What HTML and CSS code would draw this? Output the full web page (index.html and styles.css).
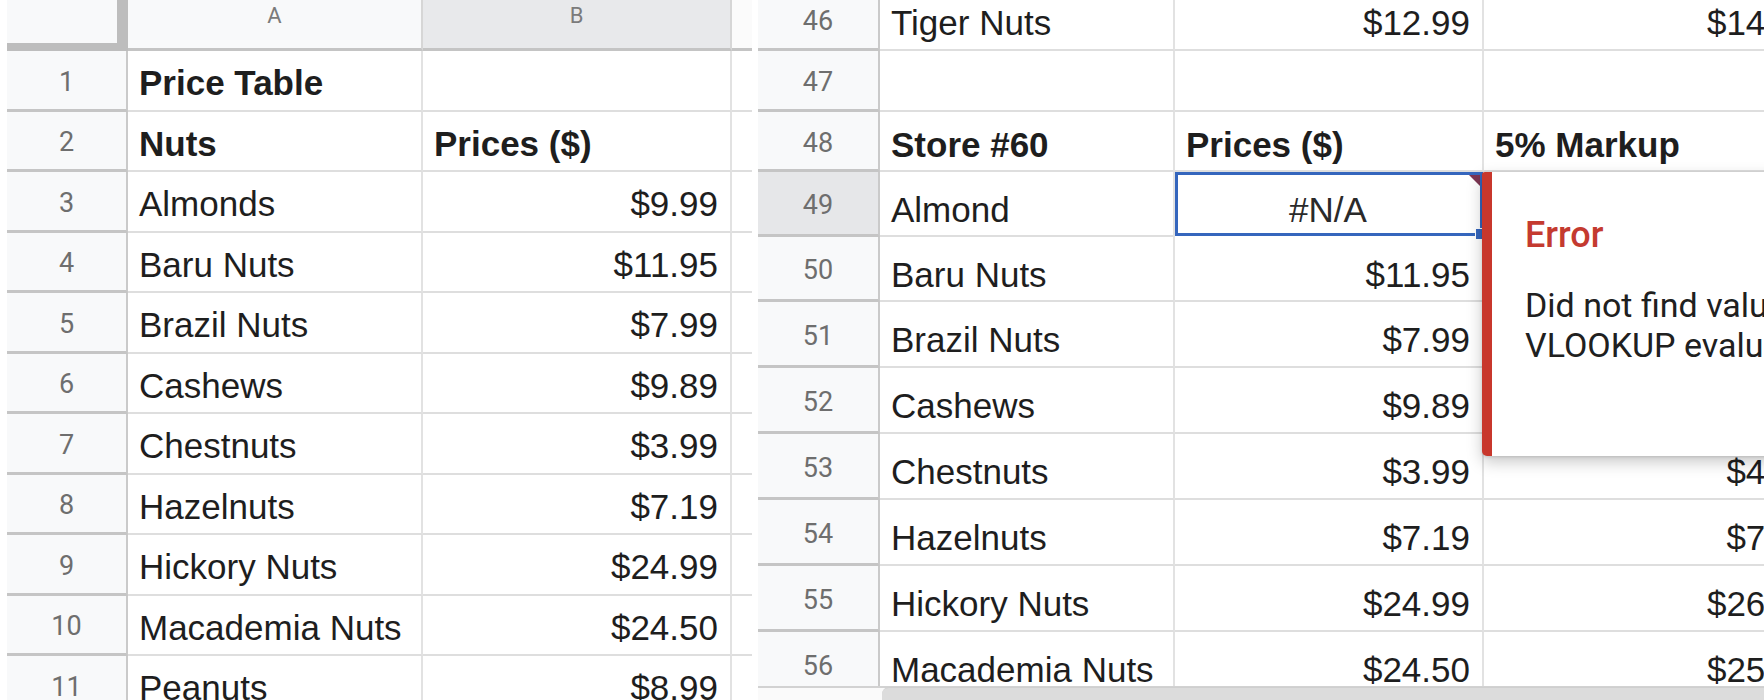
FILE: index.html
```html
<!DOCTYPE html>
<html>
<head>
<meta charset="utf-8">
<link rel="stylesheet" href="styles.css">
</head>
<body>
<div class="sheet">
  <div class="pane pane-left">
    <div class="grid grid-left">
      <div class="corner"></div>
      <div class="colhead">A</div>
      <div class="colhead colhead-sel">B</div>
      <div class="colhead colhead-c"></div>

      <div class="rowhead">1</div><div class="cell bold">Price Table</div><div class="cell"></div><div class="cell"></div>
      <div class="rowhead">2</div><div class="cell bold">Nuts</div><div class="cell bold">Prices ($)</div><div class="cell"></div>
      <div class="rowhead">3</div><div class="cell">Almonds</div><div class="cell num">$9.99</div><div class="cell"></div>
      <div class="rowhead">4</div><div class="cell">Baru Nuts</div><div class="cell num">$11.95</div><div class="cell"></div>
      <div class="rowhead">5</div><div class="cell">Brazil Nuts</div><div class="cell num">$7.99</div><div class="cell"></div>
      <div class="rowhead">6</div><div class="cell">Cashews</div><div class="cell num">$9.89</div><div class="cell"></div>
      <div class="rowhead">7</div><div class="cell">Chestnuts</div><div class="cell num">$3.99</div><div class="cell"></div>
      <div class="rowhead">8</div><div class="cell">Hazelnuts</div><div class="cell num">$7.19</div><div class="cell"></div>
      <div class="rowhead">9</div><div class="cell">Hickory Nuts</div><div class="cell num">$24.99</div><div class="cell"></div>
      <div class="rowhead">10</div><div class="cell">Macademia Nuts</div><div class="cell num">$24.50</div><div class="cell"></div>
      <div class="rowhead">11</div><div class="cell">Peanuts</div><div class="cell num">$8.99</div><div class="cell"></div>
    </div>
  </div>

  <div class="pane pane-right">
    <div class="grid grid-right">
      <div class="rowhead">46</div><div class="cell">Tiger Nuts</div><div class="cell num">$12.99</div><div class="cell num">$14.29</div>
      <div class="rowhead">47</div><div class="cell"></div><div class="cell"></div><div class="cell"></div>
      <div class="rowhead">48</div><div class="cell bold">Store #60</div><div class="cell bold">Prices ($)</div><div class="cell bold">5% Markup</div>
      <div class="rowhead rowhead-sel">49</div><div class="cell">Almond</div>
      <div class="cell cell-center selected">#N/A<span class="err-tri"></span><span class="sel-handle"></span></div>
      <div class="cell num"></div>
      <div class="rowhead">50</div><div class="cell">Baru Nuts</div><div class="cell num">$11.95</div><div class="cell num"></div>
      <div class="rowhead">51</div><div class="cell">Brazil Nuts</div><div class="cell num">$7.99</div><div class="cell num"></div>
      <div class="rowhead">52</div><div class="cell">Cashews</div><div class="cell num">$9.89</div><div class="cell num"></div>
      <div class="rowhead">53</div><div class="cell">Chestnuts</div><div class="cell num">$3.99</div><div class="cell num">$4.19</div>
      <div class="rowhead">54</div><div class="cell">Hazelnuts</div><div class="cell num">$7.19</div><div class="cell num">$7.55</div>
      <div class="rowhead">55</div><div class="cell">Hickory Nuts</div><div class="cell num">$24.99</div><div class="cell num">$26.24</div>
      <div class="rowhead">56</div><div class="cell">Macademia Nuts</div><div class="cell num">$24.50</div><div class="cell num">$25.73</div>
    </div>

    <div class="err-pop">
      <div class="err-title">Error</div>
      <div class="err-body">Did not find value 'Almond' in<br>VLOOKUP evaluation.</div>
    </div>

    <div class="hscroll"><div class="hscroll-thumb"></div></div>
  </div>
</div>
</body>
</html>
```

FILE: styles.css
```css
html, body {
  margin: 0;
  padding: 0;
  background: #ffffff;
}

body {
  width: 1764px;
  height: 700px;
  overflow: hidden;
  font-family: "Liberation Sans", Arial, sans-serif;
  color: #1e1e1e;
}

.sheet {
  display: flex;
  height: 700px;
  padding-left: 7px;
  gap: 6px;
}

.pane {
  height: 700px;
  overflow: hidden;
}

.pane-left {
  width: 745px;
  flex: none;
}

.pane-right {
  flex: 1;
  position: relative;
}

.grid {
  display: grid;
}

.grid-left {
  grid-template-columns: 121px 295px 309px 20px;
  grid-template-rows: 51px repeat(11, 60.5px);
}

.grid-right {
  grid-template-columns: 122px 295px 309px 344px;
  grid-template-rows: 61px 61px 60px 65px 65px 66px 66px 66px 66px 66px 66px;
  margin-top: -10px;
}

/* header row */
.corner {
  box-sizing: border-box;
  background: #f8f9fa;
  border-right: 11px solid #bdbdbd;
  border-bottom: 8px solid #bdbdbd;
}

.colhead {
  box-sizing: border-box;
  background: #f8f9fa;
  border-right: 2px solid #d6d6d6;
  border-bottom: 3px solid #c4c4c4;
  display: flex;
  align-items: center;
  justify-content: center;
  padding-bottom: 17px;
  font-family: Roboto, "Liberation Sans", sans-serif;
  font-size: 22px;
  color: #7b7b7b;
}

.colhead-sel {
  background: #e8e9eb;
}

.colhead-c {
  border-right: none;
  background: #fbfbfb;
}

/* row headers */
.rowhead {
  box-sizing: border-box;
  background: #f8f9fa;
  border-right: 2px solid #cacaca;
  border-bottom: 3px solid #c5c5c5;
  display: flex;
  align-items: center;
  justify-content: center;
  padding-top: 4px;
  font-family: Roboto, "Liberation Sans", sans-serif;
  font-size: 27px;
  color: #6e6e6e;
}

.rowhead-sel {
  background: #e6e7e9;
}

/* cells */
.cell {
  box-sizing: border-box;
  border-right: 2px solid #e2e2e2;
  border-bottom: 2px solid #dedede;
  display: flex;
  align-items: center;
  padding: 6px 12px 0 11px;
  font-size: 35px;
  white-space: nowrap;
  overflow: hidden;
}

.grid-right .cell {
  padding-top: 7px;
}

.grid-right .cell:nth-child(n+13) {
  padding-top: 12px;
}

.num {
  justify-content: flex-end;
}

.cell-center {
  justify-content: center;
  color: #2a2a2a;
}

.bold {
  font-weight: 700;
}

.selected {
  position: relative;
  overflow: visible;
  border-color: transparent;
}

.selected::after {
  content: "";
  position: absolute;
  left: 0;
  top: 0;
  right: -1px;
  bottom: -1px;
  border: 3px solid #3566bd;
  pointer-events: none;
}

.err-tri {
  position: absolute;
  top: 3px;
  right: 2px;
  width: 0;
  height: 0;
  border-top: 11px solid #7c3552;
  border-left: 11px solid transparent;
  z-index: 2;
}

.sel-handle {
  position: absolute;
  right: -4px;
  bottom: -5px;
  width: 9px;
  height: 10px;
  background: #3566bd;
  border: 1px solid #ffffff;
  z-index: 2;
}

/* error tooltip */
.err-pop {
  position: absolute;
  left: 724px;
  top: 172px;
  width: 330px;
  height: 284px;
  box-sizing: border-box;
  background: #ffffff;
  border-left: 10px solid #c8372c;
  border-radius: 3px 0 0 5px;
  box-shadow: 0 6px 16px rgba(0, 0, 0, 0.22), 0 1px 3px rgba(0, 0, 0, 0.12);
  padding: 43px 0 0 33px;
  font-family: Roboto, "Liberation Sans", sans-serif;
  white-space: nowrap;
  z-index: 5;
}

.err-title {
  font-size: 36px;
  line-height: 40px;
  font-weight: 500;
  color: #c43a30;
}

.err-body {
  margin-top: 30px;
  font-size: 34px;
  line-height: 40px;
  color: #202020;
}

/* horizontal scrollbar */
.hscroll {
  position: absolute;
  left: 0;
  right: 0;
  bottom: 0;
  height: 12px;
  background: #fafafa;
  border-top: 2px solid #d2d2d2;
  display: flex;
  padding-left: 124px;
  z-index: 4;
}

.hscroll-thumb {
  flex: 1;
  margin-top: -1px;
  background: #dcdcdc;
  border-top-left-radius: 7px;
  border-top: 1px solid #cfcfcf;
}
```
